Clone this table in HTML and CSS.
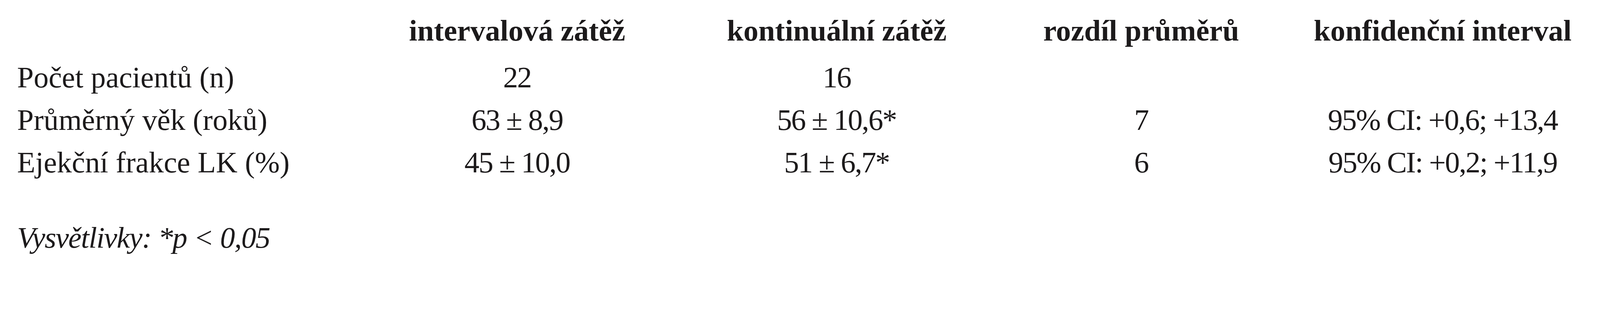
FILE: index.html
```html
<!DOCTYPE html>
<html lang="cs">
<head>
<meta charset="utf-8">
<title>Tabulka</title>
<link rel="stylesheet" href="styles.css">
</head>
<body>
<div class="page">
  <div class="table">
    <div class="cell head label"></div>
    <div class="cell head">intervalová zátěž</div>
    <div class="cell head">kontinuální zátěž</div>
    <div class="cell head">rozdíl průměrů</div>
    <div class="cell head last">konfidenční interval</div>

    <div class="cell label">Počet pacientů (n)</div>
    <div class="cell num">22</div>
    <div class="cell num">16</div>
    <div class="cell num"></div>
    <div class="cell num last"></div>

    <div class="cell label">Průměrný věk (roků)</div>
    <div class="cell num">63 ± 8,9</div>
    <div class="cell num">56 ± 10,6*</div>
    <div class="cell num">7</div>
    <div class="cell num last">95% CI: +0,6; +13,4</div>

    <div class="cell label">Ejekční frakce LK (%)</div>
    <div class="cell num">45 ± 10,0</div>
    <div class="cell num">51 ± 6,7*</div>
    <div class="cell num">6</div>
    <div class="cell num last">95% CI: +0,2; +11,9</div>
  </div>
  <p class="note">Vysvětlivky: *p &lt; 0,05</p>
</div>
</body>
</html>
```

FILE: styles.css
```css
:root {
  --u: calc(100vw / 4771);
}

html, body {
  margin: 0;
  padding: 0;
  background: #ffffff;
  overflow: hidden;
}

.page {
  padding: calc(28 * var(--u)) 0 0 calc(51 * var(--u));
  font-family: "Liberation Serif", "DejaVu Serif", serif;
  font-size: calc(89 * var(--u));
  color: #1c1a1b;
}

.table {
  display: grid;
  grid-template-columns:
    calc(1041 * var(--u))
    calc(900 * var(--u))
    calc(1006 * var(--u))
    calc(810 * var(--u))
    calc(963 * var(--u));
  grid-template-rows:
    calc(140 * var(--u))
    calc(127 * var(--u))
    calc(127 * var(--u))
    calc(127 * var(--u));
  line-height: calc(127 * var(--u));
}

.cell {
  text-align: center;
  white-space: nowrap;
  box-sizing: border-box;
}

.cell.label {
  text-align: left;
}

.cell.last {
  padding-left: calc(25 * var(--u));
}

.num {
  letter-spacing: -0.03em;
}

.head {
  font-weight: bold;
  height: calc(127 * var(--u));
}

.note {
  margin: calc(97 * var(--u)) 0 0 0;
  font-style: italic;
  line-height: calc(127 * var(--u));
  white-space: nowrap;
  letter-spacing: -0.02em;
}
```
